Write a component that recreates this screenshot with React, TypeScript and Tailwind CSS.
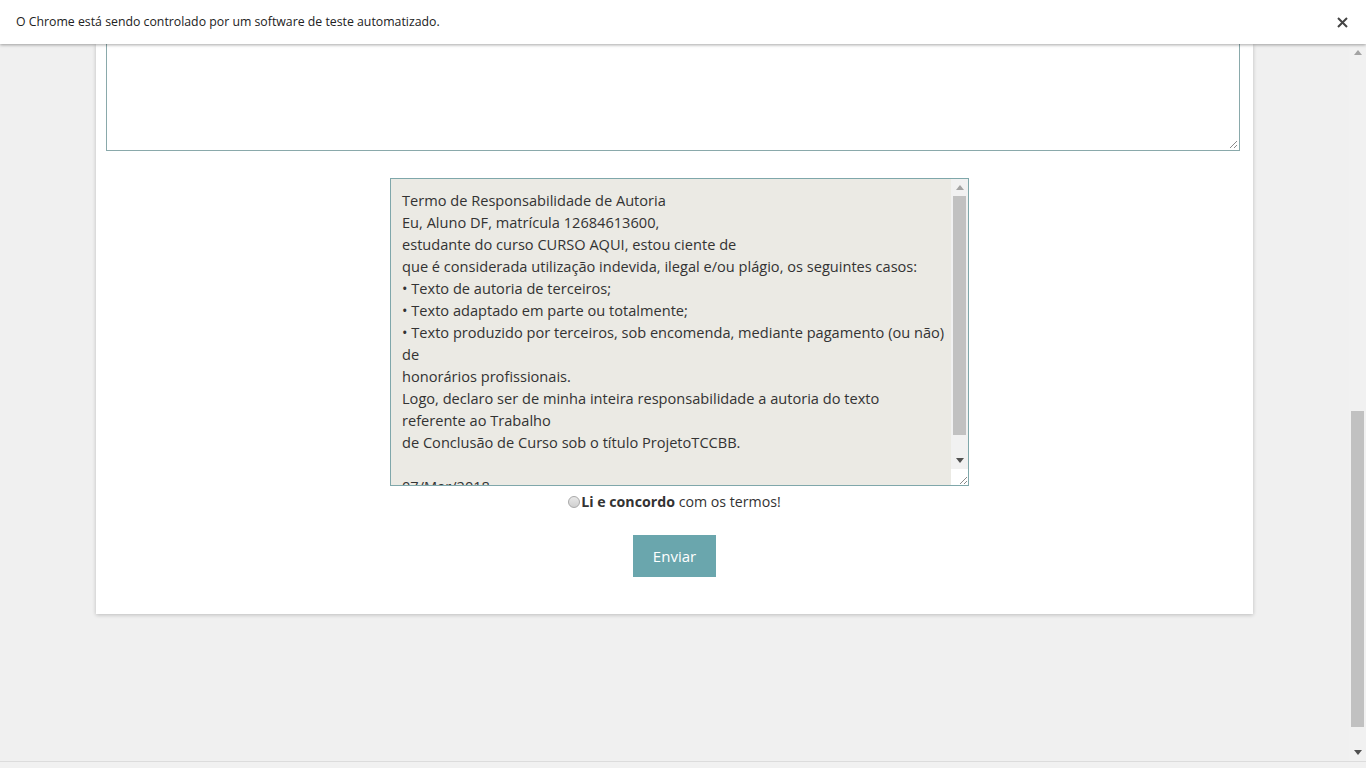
import React from 'react';

const TERMS = [
  'Termo de Responsabilidade de Autoria',
  'Eu, Aluno DF, matrícula 12684613600,',
  'estudante do curso CURSO AQUI, estou ciente de',
  'que é considerada utilização indevida, ilegal e/ou plágio, os seguintes casos:',
  '• Texto de autoria de terceiros;',
  '• Texto adaptado em parte ou totalmente;',
  '• Texto produzido por terceiros, sob encomenda, mediante pagamento (ou não)',
  'de',
  'honorários profissionais.',
  'Logo, declaro ser de minha inteira responsabilidade a autoria do texto',
  'referente ao Trabalho',
  'de Conclusão de Curso sob o título ProjetoTCCBB.',
  '',
  '07/Mar/2018',
];

function Grip() {
  return (
    <svg width="10" height="10" viewBox="0 0 10 10" className="block">
      <line x1="2" y1="9" x2="9" y2="2" stroke="#8a8a8a" strokeWidth="1" />
      <line x1="6" y1="9" x2="9" y2="6" stroke="#8a8a8a" strokeWidth="1" />
    </svg>
  );
}

function Arrow({ up }: { up?: boolean }) {
  return (
    <svg width="8" height="5" viewBox="0 0 8 5" className="block">
      {up ? <polygon points="0,5 8,5 4,0" fill="#a3a3a3" /> : <polygon points="0,0 8,0 4,5" fill="#505050" />}
    </svg>
  );
}

export default function App() {
  return (
    <div className="h-screen w-full overflow-hidden bg-[#f0f0f0] flex flex-col font-['Open_Sans',sans-serif]">
      {/* Chrome info bar */}
      <div className="h-[44px] shrink-0 bg-white flex items-center justify-between pl-4 pr-[18px] shadow-[0_1px_3px_rgba(0,0,0,0.35)] z-10 relative">
        <span className="text-[12.3px] text-[#222]">O Chrome está sendo controlado por um software de teste automatizado.</span>
        <svg width="11" height="11" viewBox="0 0 11 11">
          <path d="M1 1 L10 10 M10 1 L1 10" stroke="#444" strokeWidth="2" />
        </svg>
      </div>

      <div className="flex flex-1 min-h-0">
        {/* page */}
        <div className="flex-1 min-w-0">
          <div className="ml-[96px] w-[1157px] bg-white shadow-[0_1px_4px_rgba(0,0,0,0.22)] pb-[37px]">
            {/* big textarea (scrolled) */}
            <div className="pl-[10px] pr-[13px]">
              <div className="h-[107px] border-x border-b border-[#8aa9ab] bg-white flex items-end justify-end pr-[1px] pb-[1px]">
                <Grip />
              </div>
            </div>

            {/* terms box */}
            <div className="pl-[294px] mt-[27px]">
              <div className="w-[579px] h-[308px] border border-[#7fa7aa] bg-[#ebeae4] flex overflow-hidden">
                <div className="flex-1 min-w-0 pl-[11px] pt-[10px] text-[14.6px] leading-[22px] text-[#333] whitespace-pre">
                  {TERMS.map((l, i) => (
                    <div key={i} className="h-[22px]">{l}</div>
                  ))}
                </div>
                <div className="w-[17px] shrink-0 flex flex-col bg-[#f1f1f1] relative z-10">
                  <div className="h-[17px] flex items-center justify-center"><Arrow up /></div>
                  <div className="flex-1 flex flex-col pb-[5px]">
                    <div className="h-[239px] mx-[2px] bg-[#c1c1c1]" />
                  </div>
                  <div className="h-[17px] flex items-center justify-center"><Arrow /></div>
                  <div className="h-[16px] bg-white flex items-end justify-end"><Grip /></div>
                </div>
              </div>
            </div>

            {/* agree */}
            <div className="flex justify-center items-center mt-[5px] text-[14.2px] text-[#333] leading-[22px]">
              <span className="w-[12px] h-[12px] rounded-full border border-[#a9a9a9] bg-gradient-to-b from-[#e8e8e8] to-[#d0d0d0] mr-[1px]" />
              <span className="font-bold">Li e concordo</span>
              <span>&nbsp;com os termos!</span>
            </div>

            <div className="flex justify-center mt-[22px]">
              <button className="w-[83px] h-[42px] bg-[#6aa6ad] text-white text-[15px]">Enviar</button>
            </div>
          </div>
        </div>

        {/* window scrollbar */}
        <div className="w-[17px] shrink-0 bg-[#f1f1f1] flex flex-col">
          <div className="h-[17px] flex items-center justify-center"><Arrow up /></div>
          <div className="flex-1 flex flex-col justify-end pb-[17px]">
            <div className="h-[316px] mx-[2px] bg-[#c1c1c1]" />
          </div>
          <div className="h-[17px] flex items-center justify-center"><Arrow /></div>
        </div>
      </div>
      <div className="h-[7px] shrink-0 bg-[#f1f1f1] border-t border-[#dcdcdc]" />
    </div>
  );
}
